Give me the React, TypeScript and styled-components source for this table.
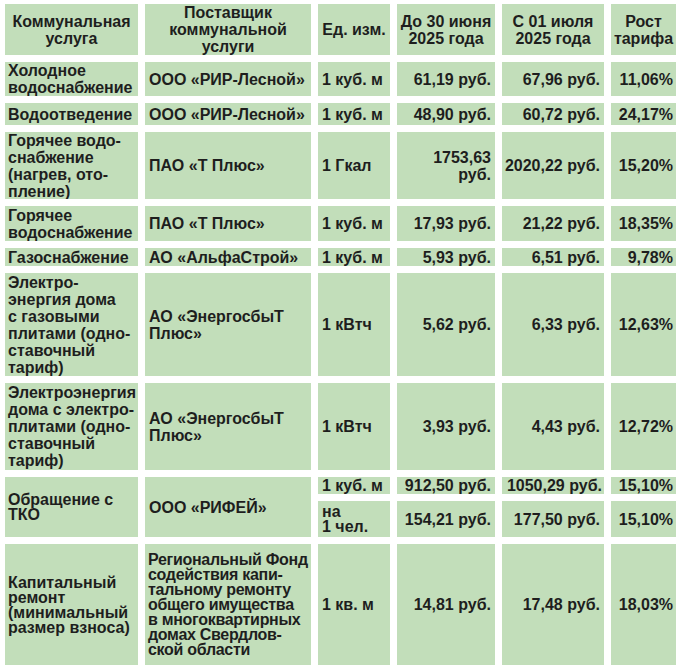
import React from "react";
import styled, { createGlobalStyle } from "styled-components";

const GlobalStyle = createGlobalStyle`
  html, body {
    margin: 0;
    padding: 0;
    background: #ffffff;
  }
  body {
    font-family: "Liberation Sans", Arial, sans-serif;
  }
`;

const Page = styled.div`
  padding: 4px 5px;
  background: #ffffff;
`;

const Table = styled.div`
  display: grid;
  grid-template-columns: 133px 166px 72px 98px 102px 65px;
  grid-template-rows: 51px 34px 22px 67px 35px 18px 103px 87px 17px 36px 121px;
  column-gap: 7px;
  row-gap: 7px;
`;

type Align = "left" | "center" | "right";

const Cell = styled.div<{
  $align?: Align;
  $tight?: boolean;
  $squeeze?: boolean;
  $span?: number;
  $pl?: number;
  $pr?: number;
}>`
  background: #c2deba;
  color: #1e1e1e;
  font-family: "Liberation Sans", Arial, sans-serif;
  font-weight: bold;
  font-size: 16px;
  line-height: ${(p) => (p.$tight ? 15 : 17)}px;
  letter-spacing: ${(p) => (p.$squeeze ? "-0.3px" : "normal")};
  white-space: nowrap;
  display: flex;
  align-items: center;
  justify-content: ${(p) =>
    p.$align === "right" ? "flex-end" : p.$align === "center" ? "center" : "flex-start"};
  text-align: ${(p) => p.$align ?? "left"};
  padding: 0 ${(p) => p.$pr ?? 4}px 0 ${(p) => p.$pl ?? 4}px;
  overflow: hidden;
  ${(p) => (p.$span ? `grid-row: span ${p.$span};` : "")}
`;

const Head = styled(Cell).attrs({ $align: "center" as Align })``;

type Row = {
  service: React.ReactNode;
  provider: React.ReactNode;
  unit: React.ReactNode;
  before: React.ReactNode;
  after: React.ReactNode;
  growth: string;
};

const rows: Row[] = [
  {
    service: <>Холодное<br />водоснабжение</>,
    provider: "ООО «РИР-Лесной»",
    unit: "1 куб. м",
    before: "61,19 руб.",
    after: "67,96 руб.",
    growth: "11,06%",
  },
  {
    service: "Водоотведение",
    provider: "ООО «РИР-Лесной»",
    unit: "1 куб. м",
    before: "48,90 руб.",
    after: "60,72 руб.",
    growth: "24,17%",
  },
  {
    service: <>Горячее водо-<br />снабжение<br />(нагрев, ото-<br />пление)</>,
    provider: "ПАО «Т Плюс»",
    unit: "1 Гкал",
    before: <>1753,63<br />руб.</>,
    after: "2020,22 руб.",
    growth: "15,20%",
  },
  {
    service: <>Горячее<br />водоснабжение</>,
    provider: "ПАО «Т Плюс»",
    unit: "1 куб. м",
    before: "17,93 руб.",
    after: "21,22 руб.",
    growth: "18,35%",
  },
  {
    service: "Газоснабжение",
    provider: "АО «АльфаСтрой»",
    unit: "1 куб. м",
    before: "5,93 руб.",
    after: "6,51 руб.",
    growth: "9,78%",
  },
  {
    service: <>Электро-<br />энергия дома<br />с газовыми<br />плитами (одно-<br />ставочный<br />тариф)</>,
    provider: <>АО «ЭнергосбыТ<br />Плюс»</>,
    unit: "1 кВтч",
    before: "5,62 руб.",
    after: "6,33 руб.",
    growth: "12,63%",
  },
  {
    service: <>Электроэнергия<br />дома с электро-<br />плитами (одно-<br />ставочный<br />тариф)</>,
    provider: <>АО «ЭнергосбыТ<br />Плюс»</>,
    unit: "1 кВтч",
    before: "3,93 руб.",
    after: "4,43 руб.",
    growth: "12,72%",
  },
];

const App: React.FC = () => (
  <>
    <GlobalStyle />
    <Page>
      <Table>
        <Head>Коммунальная<br />услуга</Head>
        <Head>Поставщик<br />коммунальной<br />услуги</Head>
        <Head>Ед. изм.</Head>
        <Head>До 30 июня<br />2025 года</Head>
        <Head>С 01 июля<br />2025 года</Head>
        <Head>Рост<br />тарифа</Head>

        {rows.map((r, i) => (
          <React.Fragment key={i}>
            <Cell $pl={3} $pr={2}>
              <span>{r.service}</span>
            </Cell>
            <Cell>
              <span>{r.provider}</span>
            </Cell>
            <Cell>{r.unit}</Cell>
            <Cell $align="right">
              <span>{r.before}</span>
            </Cell>
            <Cell $align="right">{r.after}</Cell>
            <Cell $align="right" $pr={3}>{r.growth}</Cell>
          </React.Fragment>
        ))}

        <Cell $pl={3} $span={2} $tight>
          <span>Обращение с<br />ТКО</span>
        </Cell>
        <Cell $span={2}>ООО «РИФЕЙ»</Cell>
        <Cell>1 куб. м</Cell>
        <Cell $align="right">912,50 руб.</Cell>
        <Cell $align="right" $pr={2}>1050,29 руб.</Cell>
        <Cell $align="right" $pr={3}>15,10%</Cell>
        <Cell $tight>
          <span>на<br />1 чел.</span>
        </Cell>
        <Cell $align="right">154,21 руб.</Cell>
        <Cell $align="right">177,50 руб.</Cell>
        <Cell $align="right" $pr={3}>15,10%</Cell>

        <Cell $pl={3} $tight>
          <span>Капитальный<br />ремонт<br />(минимальный<br />размер взноса)</span>
        </Cell>
        <Cell $tight $squeeze $pl={3} $pr={1}>
          <span>
            Региональный Фонд<br />содействия капи-<br />тальному ремонту<br />общего имущества<br />в многоквартирных<br />домах Свердлов-<br />ской области
          </span>
        </Cell>
        <Cell>1 кв. м</Cell>
        <Cell $align="right">14,81 руб.</Cell>
        <Cell $align="right">17,48 руб.</Cell>
        <Cell $align="right" $pr={3}>18,03%</Cell>
      </Table>
    </Page>
  </>
);

export default App;
